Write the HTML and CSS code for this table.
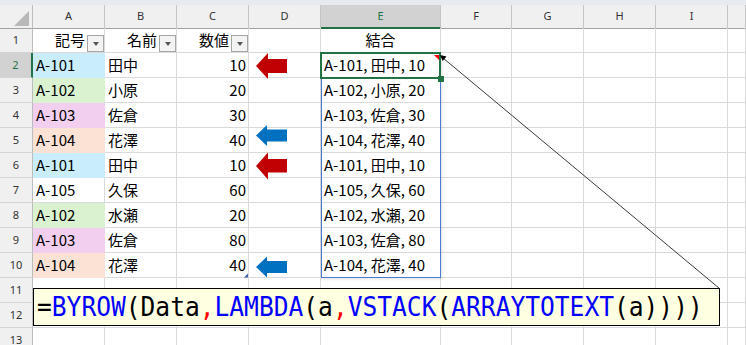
FILE: index.html
```html
<!DOCTYPE html>
<html lang="ja">
<head>
<meta charset="utf-8">
<title>BYROW</title>
<link rel="stylesheet" href="styles.css">
</head>
<body>
<div class="topbar"></div>
<div class="sheet">
  <div class="row hdr">
    <div class="corner"></div>
    <div class="ch">A</div><div class="ch">B</div><div class="ch">C</div><div class="ch">D</div>
    <div class="ch sel">E</div><div class="ch">F</div><div class="ch">G</div><div class="ch">H</div><div class="ch">I</div><div class="ch"></div>
  </div>
  <div class="row">
    <div class="rh">1</div>
    <div class="c th"><span>記号</span><span class="fb"></span></div>
    <div class="c th"><span>名前</span><span class="fb"></span></div>
    <div class="c th"><span>数値</span><span class="fb"></span></div>
    <div class="c"></div>
    <div class="c center">結合</div>
    <div class="c"></div><div class="c"></div><div class="c"></div><div class="c"></div><div class="c"></div>
  </div>
  <div class="row">
    <div class="rh sel">2</div>
    <div class="c f-blue">A-101</div><div class="c">田中</div><div class="c num">10</div><div class="c"></div>
    <div class="c">A-101, 田中, 10</div>
    <div class="c"></div><div class="c"></div><div class="c"></div><div class="c"></div><div class="c"></div>
  </div>
  <div class="row">
    <div class="rh">3</div>
    <div class="c f-green">A-102</div><div class="c">小原</div><div class="c num">20</div><div class="c"></div>
    <div class="c">A-102, 小原, 20</div>
    <div class="c"></div><div class="c"></div><div class="c"></div><div class="c"></div><div class="c"></div>
  </div>
  <div class="row">
    <div class="rh">4</div>
    <div class="c f-pink">A-103</div><div class="c">佐倉</div><div class="c num">30</div><div class="c"></div>
    <div class="c">A-103, 佐倉, 30</div>
    <div class="c"></div><div class="c"></div><div class="c"></div><div class="c"></div><div class="c"></div>
  </div>
  <div class="row">
    <div class="rh">5</div>
    <div class="c f-peach">A-104</div><div class="c">花澤</div><div class="c num">40</div><div class="c"></div>
    <div class="c">A-104, 花澤, 40</div>
    <div class="c"></div><div class="c"></div><div class="c"></div><div class="c"></div><div class="c"></div>
  </div>
  <div class="row">
    <div class="rh">6</div>
    <div class="c f-blue">A-101</div><div class="c">田中</div><div class="c num">10</div><div class="c"></div>
    <div class="c">A-101, 田中, 10</div>
    <div class="c"></div><div class="c"></div><div class="c"></div><div class="c"></div><div class="c"></div>
  </div>
  <div class="row">
    <div class="rh">7</div>
    <div class="c">A-105</div><div class="c">久保</div><div class="c num">60</div><div class="c"></div>
    <div class="c">A-105, 久保, 60</div>
    <div class="c"></div><div class="c"></div><div class="c"></div><div class="c"></div><div class="c"></div>
  </div>
  <div class="row">
    <div class="rh">8</div>
    <div class="c f-green">A-102</div><div class="c">水瀬</div><div class="c num">20</div><div class="c"></div>
    <div class="c">A-102, 水瀬, 20</div>
    <div class="c"></div><div class="c"></div><div class="c"></div><div class="c"></div><div class="c"></div>
  </div>
  <div class="row">
    <div class="rh">9</div>
    <div class="c f-pink">A-103</div><div class="c">佐倉</div><div class="c num">80</div><div class="c"></div>
    <div class="c">A-103, 佐倉, 80</div>
    <div class="c"></div><div class="c"></div><div class="c"></div><div class="c"></div><div class="c"></div>
  </div>
  <div class="row">
    <div class="rh">10</div>
    <div class="c f-peach">A-104</div><div class="c">花澤</div><div class="c num">40</div><div class="c"></div>
    <div class="c">A-104, 花澤, 40</div>
    <div class="c"></div><div class="c"></div><div class="c"></div><div class="c"></div><div class="c"></div>
  </div>
  <div class="row">
    <div class="rh">11</div>
    <div class="c"></div><div class="c"></div><div class="c"></div><div class="c"></div><div class="c"></div>
    <div class="c"></div><div class="c"></div><div class="c"></div><div class="c"></div><div class="c"></div>
  </div>
  <div class="row">
    <div class="rh">12</div>
    <div class="c"></div><div class="c"></div><div class="c"></div><div class="c"></div><div class="c"></div>
    <div class="c"></div><div class="c"></div><div class="c"></div><div class="c"></div><div class="c"></div>
  </div>
  <div class="row">
    <div class="rh">13</div>
    <div class="c"></div><div class="c"></div><div class="c"></div><div class="c"></div><div class="c"></div>
    <div class="c"></div><div class="c"></div><div class="c"></div><div class="c"></div><div class="c"></div>
  </div>
</div>

<div class="spill"></div>
<div class="selection"></div>
<div class="handle"></div>

<div class="formula"><span class="code">=<span class="fn">BYROW</span>(Data<span class="sep">,</span><span class="fn">LAMBDA</span>(a<span class="sep">,</span><span class="fn">VSTACK</span>(<span class="fn">ARRAYTOTEXT</span>(a))))</span></div>

<svg class="ov" width="746" height="345" viewBox="0 0 746 345" xmlns="http://www.w3.org/2000/svg">
  <polygon points="256,66 268,53 268,59 287,59 287,73 268,73 268,79" fill="#c00000"/>
  <polygon points="256,135.5 267,125 267,129.5 287,129.5 287,141.5 267,141.5 267,146" fill="#0070c0"/>
  <polygon points="256,166 268,152.5 268,159 287,159 287,172.5 268,172.5 268,179.5" fill="#c00000"/>
  <polygon points="256,267 267,256.5 267,261 287,261 287,273 267,273 267,277.5" fill="#0070c0"/>
  <polygon points="434,55 439,55 439,60" fill="#ff0000"/>
  <polygon points="244,277.5 248,273.5 248,277.5" fill="#3b5fa8"/>
  <line x1="443" y1="58" x2="719.5" y2="288.5" stroke="#3a3a3a" stroke-width="1"/>
  <polygon points="440,55 446.5,56.5 442.7,61.1" fill="#000"/>
</svg>
</body>
</html>
```

FILE: styles.css
```css
* {
  box-sizing: border-box;
  margin: 0;
  padding: 0;
}

html, body {
  width: 746px;
  height: 345px;
  overflow: hidden;
  background: #ffffff;
}

body {
  position: relative;
  font-family: "Noto Sans CJK JP", "Noto Sans", sans-serif;
  color: #000;
}

.topbar {
  height: 5px;
  background: #e7eaee;
}

.row {
  display: grid;
  grid-template-columns: 33px 72px 72px 72px 72px 120px 71px 72px 72px 72px 18px;
  height: 25px;
}

.row.hdr {
  height: 23px;
}

.corner {
  position: relative;
  background: #f0f0f0;
  border-right: 1px solid #bdbdbd;
  border-bottom: 1px solid #a3a3a3;
}

.corner::after {
  content: "";
  position: absolute;
  right: 3px;
  bottom: 2px;
  width: 0;
  height: 0;
  border-left: 15px solid transparent;
  border-bottom: 15px solid #b8b8b8;
}

.ch {
  background: #f0f0f0;
  border-right: 1px solid #c4c4c4;
  border-bottom: 1px solid #a3a3a3;
  font: 11px/22px "Noto Sans", sans-serif;
  text-align: center;
  color: #333;
}

.ch.sel {
  background: #d2d2d2;
  color: #217346;
  border-bottom: 2px solid #217346;
}

.rh {
  background: #f0f0f0;
  border-right: 1px solid #bdbdbd;
  border-bottom: 1px solid #d4d4d4;
  font: 11px/24px "Noto Sans", sans-serif;
  text-align: center;
  color: #333;
}

.rh.sel {
  background: #d2d2d2;
  color: #217346;
  border-right: 2px solid #217346;
}

.c {
  border-right: 1px solid #dadada;
  border-bottom: 1px solid #dadada;
  font-size: 15px;
  line-height: 24px;
  padding: 0 3px;
  white-space: nowrap;
  overflow: hidden;
}

.c.num {
  text-align: right;
  padding-right: 2px;
}

.c.center {
  text-align: center;
}

.c.th {
  display: flex;
  justify-content: flex-end;
  align-items: center;
  gap: 2px;
  padding: 0;
}

.fb {
  align-self: flex-end;
  width: 17px;
  height: 17px;
  border: 1px solid #a6a6a6;
  background: #f3f3f3;
  display: flex;
  align-items: center;
  justify-content: center;
  padding-top: 1px;
}

.fb::after {
  content: "";
  border-left: 3.5px solid transparent;
  border-right: 3.5px solid transparent;
  border-top: 4px solid #555;
}

.f-blue { background: #caedfb; border-color: #caedfb; }
.f-green { background: #daf2d0; border-color: #daf2d0; }
.f-pink { background: #f2ceef; border-color: #f2ceef; }
.f-peach { background: #fbe2d5; border-color: #fbe2d5; }

.spill {
  position: absolute;
  left: 321px;
  top: 53px;
  width: 120px;
  height: 225px;
  border: 1px solid #4a7bd0;
  box-shadow: 1px 1px 3px rgba(0, 0, 0, 0.12);
}

.selection {
  position: absolute;
  left: 320px;
  top: 52px;
  width: 121px;
  height: 27px;
  border: 2px solid #217346;
}

.handle {
  position: absolute;
  left: 438px;
  top: 76px;
  width: 6px;
  height: 6px;
  background: #217346;
}

.formula {
  position: absolute;
  left: 33px;
  top: 288px;
  width: 687px;
  height: 38px;
  background: #ffffe1;
  border: 1px solid #000;
  padding-left: 3px;
  overflow: hidden;
  white-space: nowrap;
}

.formula .code {
  display: inline-block;
  font: 27px/36px "DejaVu Sans Mono", monospace;
  transform: scaleX(0.91);
  transform-origin: 0 50%;
  color: #000;
}

.fn { color: #0000ff; }
.sep { color: #ff0000; }

.ov {
  position: absolute;
  left: 0;
  top: 0;
  pointer-events: none;
}
```
